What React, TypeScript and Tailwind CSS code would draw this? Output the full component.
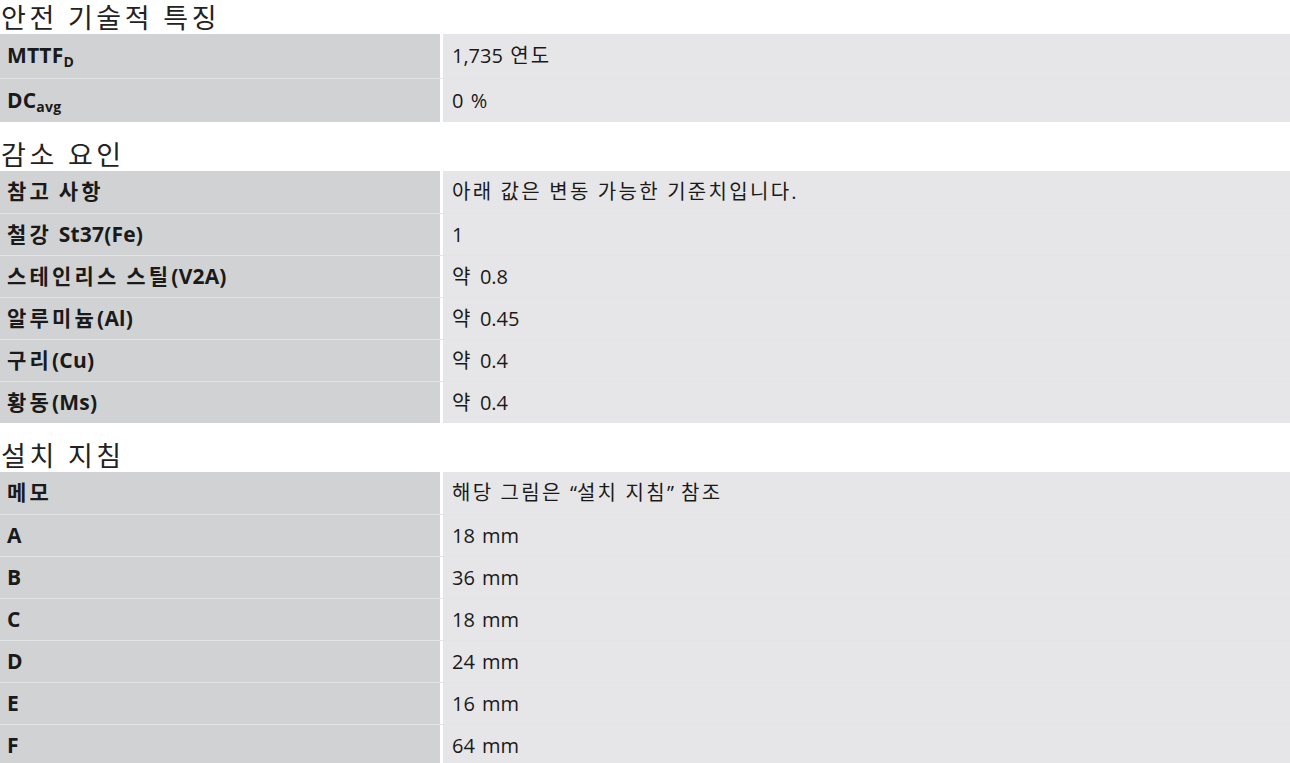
const font = "font-['Open_Sans','Noto_Sans_CJK_KR',sans-serif]";

// Hangul runs get a little extra tracking so they sit as wide as in the original
function K({ text, cls }: { text: string; cls: string }) {
  const parts = text.split(/([\uAC00-\uD7A3]+)/);
  return (
    <span>
      {parts.map((p, i) =>
        /[\uAC00-\uD7A3]/.test(p) ? (
          <span key={i} className={cls}>
            {p}
          </span>
        ) : (
          <span key={i}>{p}</span>
        )
      )}
    </span>
  );
}

type Row = { label: React.ReactNode; value: string };

const Sub = ({ children }: { children: string }) => (
  <span className="text-[14px] align-[-4px] leading-none">{children}</span>
);

const sections: { title: string; tall?: boolean; rows: Row[] }[] = [
  {
    title: "안전 기술적 특징",
    tall: true,
    rows: [
      {
        label: (
          <>
            MTTF<Sub>D</Sub>
          </>
        ),
        value: "1,735 연도",
      },
      {
        label: (
          <>
            DC<Sub>avg</Sub>
          </>
        ),
        value: "0 %",
      },
    ],
  },
  {
    title: "감소 요인",
    rows: [
      { label: "참고 사항", value: "아래 값은 변동 가능한 기준치입니다." },
      { label: "철강 St37(Fe)", value: "1" },
      { label: "스테인리스 스틸(V2A)", value: "약 0.8" },
      { label: "알루미늄(Al)", value: "약 0.45" },
      { label: "구리(Cu)", value: "약 0.4" },
      { label: "황동(Ms)", value: "약 0.4" },
    ],
  },
  {
    title: "설치 지침",
    rows: [
      { label: "메모", value: "해당 그림은 “설치 지침” 참조" },
      { label: "A", value: "18 mm" },
      { label: "B", value: "36 mm" },
      { label: "C", value: "18 mm" },
      { label: "D", value: "24 mm" },
      { label: "E", value: "16 mm" },
      { label: "F", value: "64 mm" },
    ],
  },
];

export default function App() {
  return (
    <div className={`${font} bg-white w-[1290px] h-[763px] overflow-hidden text-[#1a1a1a]`}>
      {sections.map((s, i) => (
        <div key={s.title} className={i > 0 ? "mt-[15px]" : ""}>
          <h2 className="h-[34px] flex items-end pb-[3px] pl-[1px] text-[27px] leading-none font-normal text-[#222] [word-spacing:3px]">
            <K text={s.title} cls="tracking-[3.6px]" />
          </h2>
          <div className="flex flex-col">
            {s.rows.map((r, j) => (
              <div
                key={j}
                className={`flex ${s.tall ? "h-[44px]" : "h-[42px]"} ${j > 0 ? "border-t border-[#e3e4e6]" : ""}`}
              >
                <div className="w-[440px] shrink-0 bg-[#d1d2d4] flex items-center pl-[7px] text-[21px] font-bold tracking-[0.2px] [word-spacing:1px]">
                  {typeof r.label === "string" ? (
                    <K text={r.label} cls="tracking-[3.2px]" />
                  ) : (
                    <span>{r.label}</span>
                  )}
                </div>
                <div className="w-[3px] shrink-0 bg-white" />
                <div className="flex-1 bg-[#e6e6e8] flex items-center pl-[9px] text-[20px] [word-spacing:2px]">
                  <K text={r.value} cls="tracking-[2.3px]" />
                </div>
              </div>
            ))}
          </div>
        </div>
      ))}
    </div>
  );
}
